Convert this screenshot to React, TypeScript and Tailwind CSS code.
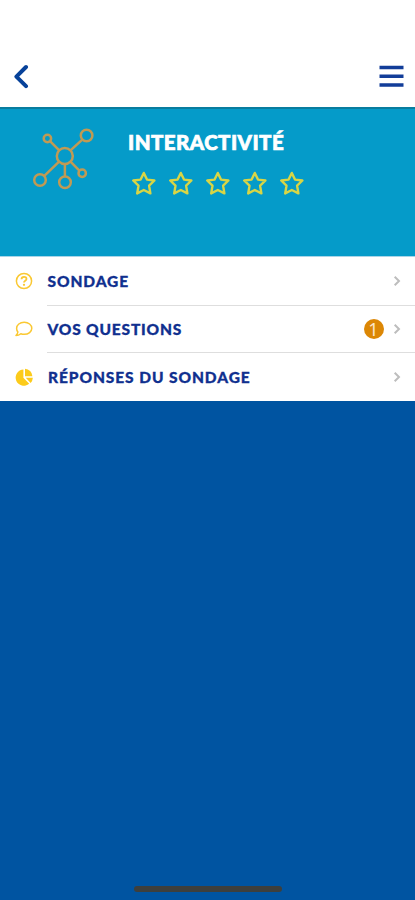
import React from 'react';

function Star() {
  return (
    <svg className="h-[27px] w-[27px]" viewBox="0 0 27 27" fill="none" stroke="#d8d545" strokeWidth="2.4" strokeLinejoin="round">
      <path d="M13.8 2.9 L17 9.6 L24.4 10.5 L19.1 15.7 L20.4 23.4 L13.8 20 L7.2 23.4 L8.5 15.7 L3.2 10.5 L10.6 9.6 Z" />
    </svg>
  );
}

function Network() {
  return (
    <svg className="h-[64px] w-[64px] shrink-0" viewBox="0 0 64 64" fill="none" stroke="#c09a54" strokeWidth="2.5">
      <circle cx="32.8" cy="29" r="8" />
      <circle cx="54.6" cy="8.5" r="5.8" />
      <circle cx="15.4" cy="11.5" r="3.7" />
      <circle cx="8" cy="53" r="5.8" />
      <circle cx="33" cy="55.3" r="5.8" />
      <circle cx="50.2" cy="46.3" r="3.7" />
      <path d="M38.5 23.4 L50.3 12.6 M18 14.2 L27 23.2 M27.1 34.7 L12.3 48.9 M32.9 37 V49.5 M38.5 34.7 L47.4 43.6" />
    </svg>
  );
}

function QuestionIcon() {
  return (
    <svg className="h-[18px] w-[18px]" viewBox="0 0 18 18" fill="none" stroke="#fac832" strokeWidth="1.5">
      <circle cx="9" cy="9" r="7.6" />
      <path d="M6.5 7.2 C6.6 4 11.5 4.1 11.5 6.9 C11.5 8.8 9 8.7 9 10.5" strokeWidth="1.8" />
      <circle cx="9" cy="12.8" r="1.15" fill="#fac832" stroke="none" />
    </svg>
  );
}

function BubbleIcon() {
  return (
    <svg className="h-[18px] w-[18px]" viewBox="0 0 18 18" fill="none" stroke="#fac832" strokeWidth="1.5" strokeLinejoin="round">
      <path d="M9.2 2.3 C13.5 2.3 16.8 4.9 16.8 8.3 C16.8 11.7 13.5 14.3 9.2 14.3 C7.9 14.3 6.8 14.1 5.8 13.7 C4.5 14.8 2.9 15.5 1 15.5 C2 14.4 2.7 13.2 2.9 12 C2 11 1.6 9.7 1.6 8.3 C1.6 4.9 4.9 2.3 9.2 2.3 Z" />
    </svg>
  );
}

function PieIcon() {
  return (
    <svg className="h-[18px] w-[18px]" viewBox="0 0 18 18" fill="#fccb1b">
      <path d="M8.4 1.4 V9.8 L14.2 15.8 A8.2 8.2 0 1 1 8.4 1.4 Z" />
      <path d="M10 .7 A7.8 7.8 0 0 1 17.4 8.2 H10 Z" />
      <path d="M10.7 9.8 H17.9 A8 8 0 0 1 15.6 14.9 Z" />
    </svg>
  );
}

type RowProps = {
  icon: React.ReactNode;
  label: string;
  labelClass: string;
  rowClass: string;
  badge?: string;
};

function Row({ icon, label, labelClass, rowClass, badge }: RowProps) {
  return (
    <li className={`flex items-stretch pl-[15px] ${rowClass}`}>
      <span className="flex w-8 shrink-0 items-center">{icon}</span>
      <div className={`flex flex-1 items-center border-[#dedede] pr-[14.5px]`}>
        <span className={`flex-1 whitespace-nowrap pb-px text-[15.5px] font-black leading-5 text-[#10308f] [-webkit-text-stroke:0.3px_#10308f] ${labelClass}`}>{label}</span>
        {badge && (
          <span className="mr-[9px] flex h-5 w-5 items-center justify-center rounded-full bg-[#dc8705] font-['Noto_Sans',sans-serif] text-[18px] leading-5 text-[#fbe5c8]">
            {badge}
          </span>
        )}
        <svg className="h-3 w-2" viewBox="0 0 8 12" fill="none" stroke="#bdbdbd" strokeWidth="2">
          <path d="M1.7 1.7 L6 6 L1.7 10.3" />
        </svg>
      </div>
    </li>
  );
}

function Divider() {
  return <li aria-hidden="true" className="ml-[47px] h-px shrink-0 bg-[#dedede]" />;
}

export default function App() {
  return (
    <div className="flex h-[900px] w-full flex-col overflow-hidden bg-[#0054a1] font-['Lato',sans-serif]">
      <header className="flex h-[107px] shrink-0 items-start justify-between bg-white pl-[13px] pr-[11px] pt-[64px]">
        <svg className="h-[25px] w-4" viewBox="0 0 16 25" fill="none" stroke="#07429a" strokeWidth="4" strokeLinecap="round" strokeLinejoin="round">
          <path d="M13 3 L3.4 12.6 L13 22.2" />
        </svg>
        <svg className="h-[25px] w-[25px]" viewBox="0 0 25 25" stroke="#123d99" strokeWidth="3.5">
          <path d="M0.5 3.6 H24.5 M0.5 12.3 H24.5 M0.5 21 H24.5" />
        </svg>
      </header>

      <section className="flex h-[149px] shrink-0 border-t-2 border-[#087d9f] bg-[#059bc9] pl-[32px] pt-[18px]">
        <Network />
        <div className="ml-[32px] pt-[3px]">
          <h1 className="whitespace-nowrap text-[20.5px] font-black leading-6 tracking-[0.45px] text-white [-webkit-text-stroke:0.7px_white]">INTERACTIVITÉ</h1>
          <div className="mt-[16px] ml-[2px] flex gap-[10px]">
            <Star />
            <Star />
            <Star />
            <Star />
            <Star />
          </div>
        </div>
      </section>

      <ul className="flex h-[145px] shrink-0 flex-col border-t border-[#a9d5e8] bg-white">
        <Row icon={<QuestionIcon />} label="SONDAGE" labelClass="pl-[0.5px] tracking-[0.9px]" rowClass="h-12" />
        <Divider />
        <Row icon={<BubbleIcon />} label="VOS QUESTIONS" labelClass="pl-[0.5px] tracking-[0.82px]" rowClass="h-[46px]" badge="1" />
        <Divider />
        <Row icon={<PieIcon />} label="RÉPONSES DU SONDAGE" labelClass="pl-px tracking-[0.92px]" rowClass="h-12" />
      </ul>

      <div className="mx-auto mt-auto mb-[8px] h-[6px] w-[148px] rounded-full bg-[#3e3f3c]" />
    </div>
  );
}
